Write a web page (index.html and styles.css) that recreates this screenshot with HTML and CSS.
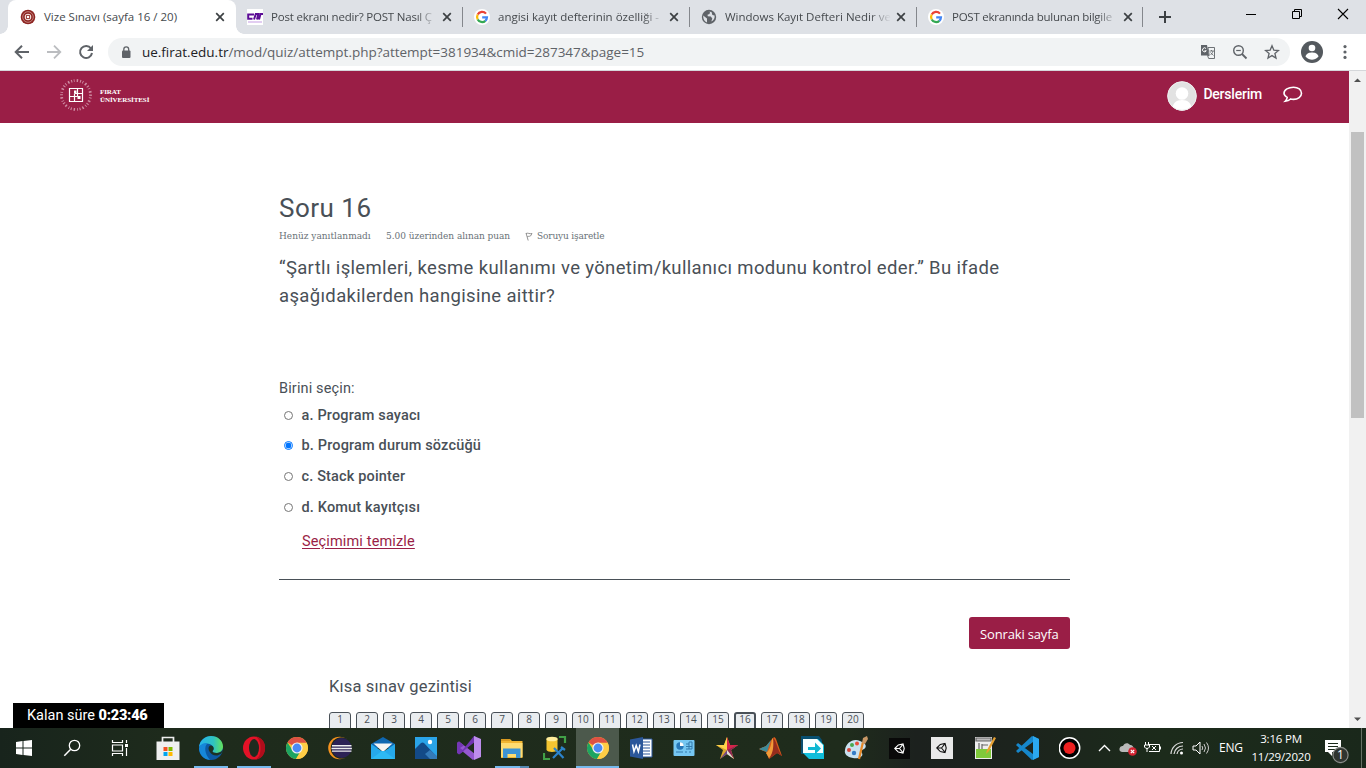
FILE: index.html
```html
<!DOCTYPE html>
<html lang="tr">
<head>
<meta charset="utf-8">
<title>Vize Sınavı (sayfa 16 / 20)</title>
<link rel="stylesheet" href="styles.css">
</head>
<body>
<svg class="defs" width="0" height="0">
  <symbol id="google" viewBox="0 0 16 16"><circle cx="8" cy="8" r="8" fill="#fff"/><g fill="none" stroke-width="2.2"><path d="M12 4.6A5 5 0 0 0 3.7 5.6" stroke="#ea4335"/><path d="M3.7 5.6a5 5 0 0 0 0 4.8" stroke="#fbbc05"/><path d="M3.7 10.4A5 5 0 0 0 11.4 11.8" stroke="#34a853"/><path d="M11.3 11.9A5 5 0 0 0 13 8.3H8.2" stroke="#4285f4"/></g></symbol>
  <symbol id="close" viewBox="0 0 10 10"><path d="M1.2 1.2l7.6 7.6M8.8 1.2L1.2 8.8" stroke="#3c4043" stroke-width="1.7"/></symbol>
  <symbol id="chrome" viewBox="0 0 24 24"><circle cx="12" cy="12" r="11" fill="#fbc02d"/><path d="M12 12L2.5 6.4A11 11 0 0 1 21.6 6.8z" fill="#dd5144"/><path d="M2.5 6.4A11 11 0 0 0 11 23l5-8.6-8.4.1z" fill="#1da462"/><path d="M12 6.8h9.6A11 11 0 0 1 11 23l5.3-8.4z" fill="#ffcd46"/><circle cx="12" cy="12" r="5.6" fill="#f1f1f1"/><circle cx="12" cy="12" r="4.4" fill="#4a8af4"/></symbol>
  <symbol id="unity" viewBox="0 0 14 14"><path d="M1 7L5.500 2.500 11.500 1.200 13 7l-1.500 5.800-6-1.300zM1.500 7H7M7 7l3.800-4.500M7 7l3.800 4.500" fill="none" stroke="currentColor" stroke-width="1.400"/></symbol>
</svg>

<header class="tabstrip">
  <div class="tab tab--active">
    <svg class="favicon" viewBox="0 0 16 16"><circle cx="8" cy="8" r="7.3" fill="#8d2421"/><circle cx="8" cy="8" r="5.3" fill="none" stroke="#d9aaa4" stroke-width=".7"/><circle cx="8" cy="8" r="3.300" fill="#f0dcd8"/><path d="M6 6h4v4H6z" fill="#a04a45"/><path d="M7 7h2v2H7z" fill="#fff"/></svg>
    <span class="tab-title"><span>Vize Sınavı (sayfa 16 / 20)</span></span><svg class="tab-close"><use href="#close"/></svg>
  </div>
  <div class="tab">
    <svg class="favicon" viewBox="0 0 16 16"><path d="M0 0h16v16H0z" fill="#fff"/><path d="M7 5.500H1.200v4.300H5.500M7 10.500L8.800 5h2.500L10 10.500M12 10.500L13.500 5H16" fill="none" stroke="#5c0c96" stroke-width="2"/><path d="M1 12h14v2H1z" fill="#e2cdf1"/></svg>
    <span class="tab-title fade t2"><span>Post ekranı nedir? POST Nasıl Ç</span></span><svg class="tab-close"><use href="#close"/></svg>
  </div>
  <div class="tab tab--sep">
    <svg class="favicon"><use href="#google"/></svg>
    <span class="tab-title fade"><span>angisi kayıt defterinin özelliği -</span></span><svg class="tab-close"><use href="#close"/></svg>
  </div>
  <div class="tab tab--sep">
    <svg class="favicon" viewBox="0 0 16 16"><circle cx="8" cy="8" r="7.2" fill="#5f6368"/><path d="M2.2 6.5L6 9.6v3.8C3.500 12.6 2 10 2.200 6.500zM7 2.500l2 .5-.5 2-2 .8.3 1.500 3 .2 1.500 2-1 3c2.500-1 3.700-3.500 3.300-6l-2.200-.4L10.500 3z" fill="#dee1e6"/></svg>
    <span class="tab-title fade"><span>Windows Kayıt Defteri Nedir ve</span></span><svg class="tab-close"><use href="#close"/></svg>
  </div>
  <div class="tab tab--sep tab--last">
    <svg class="favicon"><use href="#google"/></svg>
    <span class="tab-title fade t5"><span>POST ekranında bulunan bilgile</span></span><svg class="tab-close"><use href="#close"/></svg>
  </div>
  <svg class="newtab" viewBox="0 0 14 14"><path d="M7 1v12M1 7h12" stroke="#3c4043" stroke-width="2"/></svg>
  <div class="winctl">
    <svg viewBox="0 0 46 28"><path d="M16 14.500h10" stroke="#000"/></svg>
    <svg viewBox="0 0 46 28"><path d="M16.500 11.500h7v7h-7zM18.500 11.500v-2h7v7h-2" fill="none" stroke="#000"/></svg>
    <svg viewBox="0 0 46 28"><path d="M16 9l10 10M26 9L16 19" stroke="#000" stroke-width="1.1"/></svg>
  </div>
</header>

<div class="toolbar">
  <svg class="nav-ico" viewBox="0 0 16 16"><path d="M15 8H2M8 1.700L1.700 8 8 14.300" fill="none" stroke="#5f6368" stroke-width="2"/></svg>
  <svg class="nav-ico" viewBox="0 0 16 16"><path d="M1 8h13M8 1.700L14.300 8 8 14.300" fill="none" stroke="#bbbdc0" stroke-width="1.800"/></svg>
  <svg class="nav-ico" viewBox="0 0 16 16"><path d="M13 4.500A6 6 0 1 0 14 9" fill="none" stroke="#5f6368" stroke-width="2"/><path d="M15 1v6H9z" fill="#5f6368"/></svg>
  <div class="omnibox">
    <svg class="lock" viewBox="0 0 10 13"><rect x="1" y="4.500" width="8.500" height="7.500" rx="1" fill="#5f6368"/><path d="M2.800 5V3.400a2.400 2.400 0 0 1 4.900 0V5" fill="none" stroke="#5f6368" stroke-width="1.300"/></svg>
    <span class="url"><b>ue.firat.edu.tr</b>/mod/quiz/attempt.php?attempt=381934&amp;cmid=287347&amp;page=15</span>
    <div class="omni-icons">
      <svg viewBox="0 0 16 16"><path d="M1 1h6l2 10.500H1z" fill="#5f6368"/><path d="M8 3.500h6.500v11H8.700L7.500 11.500H9.200z" fill="#f1f3f4" stroke="#5f6368" stroke-width=".9"/><path d="M6 4.500a2 2 0 1 0 .3 2.300H4.500" fill="none" stroke="#fff"/><path d="M9.500 7h4.500M11.500 6v1M13 7c-.5 2-1.500 3-2.500 4M10.500 8.500l3 3" fill="none" stroke="#5f6368" stroke-width=".8"/></svg>
      <svg viewBox="0 0 16 16"><circle cx="6.500" cy="6.500" r="4.800" fill="none" stroke="#5f6368" stroke-width="1.400"/><path d="M10 10l4.500 4.500" stroke="#5f6368" stroke-width="1.800"/><path d="M4.200 6.500h4.600" stroke="#5f6368" stroke-width="1.200"/></svg>
      <svg viewBox="0 0 16 16"><path d="M8 1.800l1.800 4.300 4.700.4-3.600 3 1.100 4.600L8 11.600l-4 2.500 1.100-4.600-3.600-3 4.700-.4z" fill="none" stroke="#5f6368" stroke-width="1.300"/></svg>
    </div>
  </div>
  <svg class="profile" viewBox="0 0 22 22"><circle cx="11" cy="11" r="11" fill="#54595e"/><circle cx="11" cy="7" r="3.300" fill="#fff"/><path d="M4.500 15.500c1-3.500 4-4 6.500-4s5.500.5 6.500 4C15.500 18 13 18.700 11 18.700S6.500 18 4.500 15.500z" fill="#fff"/></svg>
  <svg class="menu" viewBox="0 0 4 16"><g fill="#5f6368"><circle cx="2" cy="2.600" r="1.600"/><circle cx="2" cy="8" r="1.600"/><circle cx="2" cy="13.400" r="1.600"/></g></svg>
</div>

<div class="viewport">
  <main class="page">
    <div class="sitebar">
      <div class="brand">
        <svg class="seal" viewBox="0 0 34 34"><circle cx="17" cy="17" r="14.500" fill="none" stroke="#cf8ea4" stroke-width="2.800" stroke-dasharray="1 1.600 .8 2.200 1.500 1.900"/><g fill="none" stroke="#fff" stroke-width="1.200"><path d="M10.500 10.500h13v13h-13zM18.500 10.500v8M15.500 15.500v8M10.500 18.500h8M15.500 15.500h8"/></g><path d="M15 12.500h2.500V15H15zM18.500 18h3v3h-3z" fill="#fff"/></svg>
        <div class="brand-name">FIRAT<br>ÜNİVERSİTESİ</div>
      </div>
      <div class="user">
        <svg class="avatar" viewBox="0 0 30 30"><clipPath id="av"><circle cx="15" cy="15" r="14.500"/></clipPath><g clip-path="url(#av)"><path d="M0 0h30v30H0z" fill="#e2e2e2"/><circle cx="15" cy="12.500" r="6.300" fill="#fff"/><path d="M5 30c0-8 4.500-11 10-11s10 3 10 11z" fill="#fff"/></g><circle cx="15" cy="15" r="14.300" fill="none" stroke="#eee"/></svg>
        <span class="user-link">Derslerim</span>
        <svg class="chat" viewBox="0 0 20 17"><path d="M10.500 1.200c4.700 0 8 2.600 8 6.100s-3.600 6.100-8 6.100c-1 0-2-.1-2.900-.4-1.200 1.200-3.100 2.200-5.400 2.300 1.200-1.100 1.900-2.300 2-3.900C2.200 10.300 1 9 1 7.300c0-3.500 4.500-6.100 9.500-6.100z" fill="none" stroke="#fff" stroke-width="1.600"/></svg>
      </div>
    </div>

    <section class="question">
      <h3>Soru 16</h3>
      <div class="meta"><span class="m1">Henüz yanıtlanmadı</span><span class="m2">5.00 üzerinden alınan puan</span><span class="m3"><svg class="flag" viewBox="0 0 8 9"><path d="M1 1l2.200 7.500M1 1.500c2-1 3.500.8 6 0L5.500 4C4.500 4.500 3.500 4 2.200 4.800" fill="none" stroke="#888" stroke-width=".9"/></svg>Soruyu işaretle</span></div>
      <p class="qtext">“Şartlı işlemleri, kesme kullanımı ve yönetim/kullanıcı modunu kontrol eder.” Bu ifade<br>aşağıdakilerden hangisine aittir?</p>
      <div class="prompt">Birini seçin:</div>
      <div class="answers">
        <label class="answer"><i class="radio"></i><span>a. Program sayacı</span></label>
        <label class="answer"><i class="radio radio--on"></i><span>b. Program durum sözcüğü</span></label>
        <label class="answer"><i class="radio"></i><span>c. Stack pointer</span></label>
        <label class="answer"><i class="radio"></i><span>d. Komut kayıtçısı</span></label>
      </div>
      <a class="clear">Seçimimi temizle</a>
      <div class="submit"><span class="next"><span>Sonraki sayfa</span></span></div>
    </section>

    <section class="quiznav">
      <h5>Kısa sınav gezintisi</h5>
      <div class="qn"><span>1</span><span>2</span><span>3</span><span>4</span><span>5</span><span>6</span><span>7</span><span>8</span><span>9</span><span>10</span><span>11</span><span>12</span><span>13</span><span>14</span><span>15</span><span class="current">16</span><span>17</span><span>18</span><span>19</span><span>20</span></div>
    </section>
    <div class="timer">Kalan süre <b>0:23:46</b></div>
  </main>
  <div class="scrollbar">
    <svg viewBox="0 0 17 17"><path d="M5 11h7L8.500 7.500z" fill="#505050"/></svg>
    <div class="track"><div class="thumb"></div></div>
    <svg viewBox="0 0 17 17"><path d="M5 6.500h7L8.500 10z" fill="#505050"/></svg>
  </div>
</div>

<footer class="taskbar">
  <div class="sys"><svg viewBox="0 0 24 24"><path d="M4 6l6.500-1v6.500H4zM11.500 4.900L20 4v7.500h-8.500zM4 12.500h6.500V19L4 18zM11.500 12.500H20V20l-8.500-1z" fill="#fff"/></svg></div>
  <div class="sys"><svg viewBox="0 0 24 24"><circle cx="14.500" cy="9.500" r="5.200" fill="none" stroke="#fff" stroke-width="1.300"/><path d="M10.700 13.300L4.300 19.700" stroke="#fff" stroke-width="1.500"/></svg></div>
  <div class="sys"><svg viewBox="0 0 24 24"><path d="M4.500 4v2.500h10V4M4.500 20v-2.500h10V20M4.500 9h10v6h-10zM18.500 4v3M18.500 12v8" fill="none" stroke="#fff" stroke-width="1.200"/><path d="M17 8h3v3h-3z" fill="#fff"/></svg></div>
  <div class="apps">
    <div class="app"><svg viewBox="0 0 24 24"><path d="M6.500 6V1.500h11V6" fill="none" stroke="#eee" stroke-width="1.700"/><path d="M.5 5.500h23V24H.5z" fill="#efefef"/><path d="M7.500 11h4v4h-4z" fill="#f25022"/><path d="M12.500 11h4v4h-4z" fill="#7fba00"/><path d="M7.500 16h4v4h-4z" fill="#00a4ef"/><path d="M12.500 16h4v4h-4z" fill="#ffb900"/></svg></div>
    <div class="app app--run"><svg viewBox="0 0 24 24"><defs><linearGradient id="eg"><stop stop-color="#26b4ee"/><stop offset=".6" stop-color="#2fc2c0"/><stop offset="1" stop-color="#65e25a"/></linearGradient></defs><circle cx="12" cy="12" r="12" fill="#0c59a4"/><path d="M0 11C1 4 6 0 12 0c7 0 12 5 12 10.500 0 4-3 6.500-6.500 6.500-3 0-4.500-1-4-2 1.500-1.500 1.500-3 .5-4.500C11.500 6.500 4 6 0 11z" fill="url(#eg)"/><path d="M0 12C1.500 7.500 5 6.500 8.500 7.500 5 10 5.500 18 11 23.900 4 23.500 0 18 0 12z" fill="#1687d9"/><path d="M13.500 15c1.500-1.500 1.500-3 .5-4.500-1-1-2.500-1.500-3.500-.5-3 3 1.500 10.500 8 9.500l3.500-1.700L24 15v-1c-1.500 2-4 3-6.500 3-2.500 0-4.200-.8-4-2z" fill="#1d3123"/></svg></div>
    <div class="app app--run"><svg viewBox="0 0 24 24"><ellipse cx="12" cy="12" rx="11" ry="11.500" fill="#e41227"/><path d="M14 .5c6 1 9 5.500 9 11.500s-3 10.500-9 11.500c4-3 4.500-7 4.500-11.500S18 4 14 .5z" fill="#b00d1b"/><ellipse cx="12" cy="12" rx="5" ry="8.900" fill="#1e2b1f"/></svg></div>
    <div class="app"><svg viewBox="0 0 24 24"><use href="#chrome"/></svg></div>
    <div class="app"><svg viewBox="0 0 24 24"><circle cx="11.500" cy="12" r="11.300" fill="#f7941e"/><circle cx="13.500" cy="12" r="10.800" fill="#1e2b1f"/><circle cx="13.700" cy="12" r="10" fill="#2c2255"/><path d="M4 9h19.500v1.500H4zM3.500 11.700h20.400v1.500H3.500zM4 14.500h19.500v1.300H4z" fill="#eee"/></svg></div>
    <div class="app"><svg viewBox="0 0 24 24"><path d="M0 8l12-7 12 7v4H0z" fill="#0f67b1"/><path d="M0 8l12 8L24 8v15H0z" fill="#26a9eb"/><path d="M2.500 7.500h19L12 16z" fill="#f4f4f4"/><path d="M0 23l11-8h2l11 8z" fill="#2db9f3"/></svg></div>
    <div class="app"><svg viewBox="0 0 24 24"><path d="M1 1h22v22H1z" fill="#2aa4e8"/><path d="M1 13l6-6c1-.8 2-.8 3 0l13 14v2H1z" fill="#134a87"/><path d="M11 18l5-4 7 6v3h-7z" fill="#347ab8"/><circle cx="16" cy="6" r="2.200" fill="#fff"/></svg></div>
    <div class="app"><svg viewBox="0 0 24 24"><path d="M0 7l2-1.500L18 18v4.500L16 24 2 12.500z" fill="#9458cf"/><path d="M0 7l2-1.500 5 4L3 12l4 3-5 3.500L0 17z" fill="#7436b5"/><path d="M2 18.500L17 0l2 1v4z" fill="#7135b2"/><path d="M17 0l7 3v18l-7 3z" fill="#bd8dec"/></svg></div>
    <div class="app app--group"><svg viewBox="0 0 24 24"><path d="M1 3h9l2 2h10.500v17H1z" fill="#f2b632"/><path d="M1 7h21.500v14H1z" fill="#ffdc71"/><path d="M1 3h9v2H1z" fill="#d99a20"/><path d="M3 12.500h17.500V22H16v-4H7.500v4H3z" fill="#3e94d4"/></svg></div>
    <div class="app"><svg viewBox="0 0 24 24"><path d="M16 1h6v6M1 17v6h6" fill="none" stroke="#41a047" stroke-width="2.200"/><path d="M3.500 3v11c1 2.500 10 2.500 11 0V3z" fill="#f4c531"/><ellipse cx="9" cy="3" rx="5.700" ry="2.300" fill="#ffed9a"/><path d="M11 12l9.500 10M20 12L10 22M18 11l4 3" stroke="#2c83cb" stroke-width="2.200"/></svg></div>
    <div class="app app--active"><svg viewBox="0 0 24 24"><use href="#chrome"/></svg></div>
    <div class="app"><svg viewBox="0 0 24 24"><path d="M11 3h12v18H11z" fill="#fff" stroke="#2b579a"/><path d="M14 6h7M14 9h7M14 12h7M14 15h7M14 18h7" stroke="#2b579a" stroke-width="1.200"/><path d="M1 3.500L14 1v22L1 20.500z" fill="#2b579a"/><path d="M3.500 8.500l1.500 7 2.200-6 2.200 6 1.600-7" fill="none" stroke="#fff" stroke-width="1.500"/></svg></div>
    <div class="app"><svg viewBox="0 0 24 24"><rect x="1.500" y="4" width="21" height="16" rx="1" fill="#76c7f2"/><circle cx="8" cy="10" r="3.700" fill="#2777b8"/><path d="M8 10V6.300A3.700 3.700 0 0 1 11.700 10z" fill="#fff"/><path d="M14 8h3V6h3v7h-6M17 8v5M14 10.500h6M4 16h7M13 16h2M17 16h2" stroke="#337bad" fill="none"/></svg></div>
    <div class="app"><svg viewBox="0 0 24 24"><path d="M12 1l3 8h8l-7 5 3 9-7-5-7 5 3-9-7-5h8z" fill="#dba72d"/><path d="M12 1v13h4l7-5h-8z" fill="#d5254a"/><path d="M12 14l7 9-3-9 7-5z" fill="#8c2753"/><path d="M12 14v4l7 5z" fill="#ddd"/><path d="M12 14l-7 9 7-5z" fill="#704685"/><path d="M12 1L9 9H1l11 5z" fill="#ffd34a"/></svg></div>
    <div class="app"><svg viewBox="0 0 24 24"><path d="M1 13l7-3 7-8c1-1 2-1 3 1l6 17-5-3-8 6-3-7z" fill="#d85c1b"/><path d="M1 13l7-3 5-6-4 12z" fill="#3c8b99"/><path d="M15 2c3 1 4 11 9 18l-5-3-8 6c4-7 4-14 4-21z" fill="#962d1d"/><path d="M14 3c-1 8-3 12-6 14l3 5c4-4 5-12 4-20z" fill="#f29c38"/></svg></div>
    <div class="app"><svg viewBox="0 0 24 24"><path d="M0 0h18l3 4v14H0z" fill="#084f70"/><path d="M2 3h15l6 6v14H8l-6-6z" fill="#10bedb"/><path d="M2 3h14l6 6v8H2z" fill="#f5ffff"/><path d="M7 11h7V6.500l6 6-6 6V14H7z" fill="#08b8d3"/></svg></div>
    <div class="app"><svg viewBox="0 0 24 24"><path d="M1 14C2 7 9 2 16 5c8 3 6 7 4 8-3 1-3 3-2 4 2 4-4 6-9 5-6-1-9-4-8-8z" fill="#c9e1ef"/><circle cx="5" cy="14" r="2" fill="#d9463b"/><circle cx="8" cy="9" r="2" fill="#48a84e"/><circle cx="13" cy="7.500" r="2" fill="#e94f3a"/><circle cx="10" cy="17" r="2.200" fill="#347cc6"/><path d="M15 23l4-17" stroke="#e88925" stroke-width="2.200"/><path d="M18 7l1-5 4-2 1 3-3 5z" fill="#c99866"/></svg></div>
    <div class="app"><svg viewBox="0 0 24 24"><path d="M2 2h21v21H2z" fill="#090909"/><use href="#unity" x="7" y="7" width="11" height="11" color="#fff"/></svg></div>
    <div class="app"><svg viewBox="0 0 24 24"><path d="M1 1h22v22H1z" fill="#e9e9e9"/><use href="#unity" x="6" y="6.500" width="11" height="11" color="#111"/></svg></div>
    <div class="app"><svg viewBox="0 0 24 24"><path d="M2 1h17v22H2z" fill="#eee"/><path d="M3 13h15v9H3z" fill="#80c93b"/><path d="M3 2h15v3H3zM6 7v6M9 8v5M9 9h6" stroke="#666" stroke-width="1.200" fill="#bbb"/><path d="M13 18l1-4 7-13 2 1-7 13z" fill="#e7a132"/></svg></div>
    <div class="app"><svg viewBox="0 0 24 24"><path d="M16 0l7 3v18l-7 3L0 9l2-2 15 11V6L2 17l-2-2z" fill="#1687cb"/><path d="M17 0l6 3v18l-6 3z" fill="#2ba8ef"/></svg></div>
    <div class="app"><svg viewBox="0 0 24 24"><circle cx="10.500" cy="12" r="10.200" fill="#000" stroke="#fff" stroke-width="1.500"/><circle cx="10.500" cy="12" r="6" fill="#ed2020"/></svg></div>
  </div>
  <div class="tray">
    <svg viewBox="0 0 24 24"><path d="M6 15l5.500-5.500L17 15" fill="none" stroke="#fff" stroke-width="1.400"/></svg>
    <svg viewBox="0 0 24 24"><path d="M5 16a3 3 0 0 1 1-6c1-3 5-4 7-1 3 0 4 2 4 7z" fill="#b9b9b9"/><circle cx="15.500" cy="15.500" r="4.300" fill="#d42331"/><path d="M13.800 13.800l3.400 3.400M17.200 13.800l-3.400 3.400" stroke="#fff" stroke-width="1.200"/></svg>
    <svg viewBox="0 0 24 24"><path d="M8 8.500h10.500v7H8M19.500 10.500v3M11 10l4 4M15 10l-4 4M4.500 6v3M7.500 6v3M3.500 9h5v2c-1 2-4 2-5 0zM6 12v4" fill="none" stroke="#fff" stroke-width="1"/></svg>
    <svg viewBox="0 0 24 24"><path d="M6 18A12 12 0 0 1 18 6.500M9 18a9 9 0 0 1 9-8M12 18a6 6 0 0 1 6-5" fill="none" stroke="#ddd" stroke-width="1.200"/><circle cx="16.500" cy="17" r="1.500" fill="#fff"/></svg>
    <svg viewBox="0 0 24 24"><path d="M4 10h3l4-4v12l-4-4H4z" fill="none" stroke="#fff"/><path d="M13 10q1.500 2 0 4M15 8q3 4 0 8M17.500 6.500q4 5.500 0 11" fill="none" stroke="#ccc"/></svg>
  </div>
  <span class="lang">ENG</span>
  <div class="clock"><span>3:16 PM</span><span class="date">11/29/2020</span></div>
  <div class="notif"><svg viewBox="0 0 26 26"><path d="M1 2h16v12H8v4l-4-4H1z" fill="#fff"/><path d="M4 5.500h10M4 8.500h10M4 11.500h7" stroke="#1b2a1b"/><circle cx="16.500" cy="17" r="7.600" fill="#303530" stroke="#8b8e8b" stroke-width="1.200"/></svg><span>1</span></div>
</footer>
</body>
</html>
```
FILE: styles.css
```css
* { box-sizing: border-box; }
body { margin: 0; width: 1366px; height: 768px; overflow: hidden; display: flex; flex-direction: column; font-family: "Open Sans", "Noto Sans", sans-serif; background: #fff; }
svg { display: block; flex: none; }
.defs { position: absolute; }

.tabstrip { flex: none; height: 34px; background: #dee1e6; display: flex; align-items: stretch; padding-left: 8px; }
.tab { width: 227px; flex: none; display: flex; align-items: center; padding-left: 12px; position: relative; }
.tab--active { background: #fff; border-radius: 8px 8px 0 0; width: 228px; margin-right: -1px; }
.tab--active::before, .tab--active::after { content: ""; position: absolute; bottom: 0; width: 8px; height: 8px; }
.tab--active::before { left: -8px; background: radial-gradient(circle at 0 0, transparent 7.5px, #fff 8px); }
.tab--active::after { right: -8px; background: radial-gradient(circle at 100% 0, transparent 7.5px, #fff 8px); }
.tab--sep { background: linear-gradient(#84878c, #84878c) 0 7px / 1px 20px no-repeat; }
.tab--last::after { content: ""; position: absolute; right: 0; top: 7px; width: 1px; height: 20px; background: #84878c; }
.favicon { width: 16px; height: 16px; margin-right: 8px; }
.tab-title { width: 166px; white-space: nowrap; font-size: 11.5px; color: #45494d; line-height: 20px; }
.fade { -webkit-mask-image: linear-gradient(90deg, #000 145px, transparent 166px); mask-image: linear-gradient(90deg, #000 145px, transparent 166px); }
.t2 { letter-spacing: -.2px; }
.t5 { letter-spacing: -.25px; }
.tab-close { width: 10px; height: 10px; margin-left: 5px; }
.newtab { width: 14px; height: 14px; margin: 10px 0 0 15px; }
.winctl { display: flex; margin-left: auto; margin-right: -2px; }
.winctl svg { width: 46px; height: 28px; }

.toolbar { flex: none; height: 37px; border-bottom: 1px solid #d5d7da; display: flex; align-items: center; padding-left: 14px; background: #fff; }
.nav-ico { width: 16px; height: 16px; margin-right: 16px; }
.omnibox { width: 1182px; height: 28px; margin-left: -2px; border-radius: 14px; background: #f1f3f4; display: flex; align-items: center; padding: 0 10px 0 13px; }
.lock { width: 10px; height: 13px; margin-right: 11px; }
.url { font-size: 13.5px; letter-spacing: -.02px; color: #5f6368; white-space: nowrap; }
.url b { font-weight: 400; color: #202124; }
.omni-icons { display: flex; gap: 16px; margin-left: auto; }
.omni-icons svg { width: 16px; height: 16px; }
.profile { width: 22px; height: 22px; margin-left: 11px; }
.menu { width: 4px; height: 16px; margin-left: 20px; }

.viewport { flex: none; height: 657px; display: flex; }
.page { width: 1349px; height: 657px; overflow: hidden; position: relative; background: #fff; color: #495057; font-family: Roboto, sans-serif; }
.sitebar { height: 52px; background: #9a1e46; display: flex; justify-content: space-between; padding: 0 46px 0 59px; }
.brand { display: flex; align-items: flex-start; }
.seal { width: 34px; height: 34px; margin-top: 7px; }
.brand-name { margin: 17px 0 0 7px; font: 700 7px/8px "Liberation Serif", serif; letter-spacing: -.07px; color: #fff; }
.user { display: flex; align-items: flex-start; color: #fff; }
.avatar { width: 30px; height: 30px; margin-top: 10px; }
.user-link { font-size: 14px; line-height: 20px; letter-spacing: -.22px; margin: 13px 0 0 6px; font-weight: 500; }
.chat { width: 20px; height: 17px; margin: 15px 0 0 21px; }

.question { margin-left: 279px; width: 791px; padding-top: 68px; }
h3 { margin: 0; font-size: 26px; font-weight: 400; line-height: 34px; letter-spacing: .5px; white-space: nowrap; }
.meta { display: flex; height: 20px; margin-top: 2px; line-height: 18px; font-family: "DejaVu Serif", serif; font-size: 9px; color: #6a7278; white-space: nowrap; }
.m1 { width: 107px; }
.m2 { width: 139px; letter-spacing: -.04px; }
.m3 { display: flex; align-items: center; height: 18px; letter-spacing: -.15px; }
.flag { width: 8px; height: 9px; margin: 1px 4px 0 0; }
.qtext { margin: 7px 0 0; font-size: 18.5px; line-height: 28px; letter-spacing: .345px; white-space: nowrap; }
.prompt { margin-top: 69px; font-size: 14.5px; line-height: 20px; letter-spacing: .14px; }
.answers { margin-top: 1px; }
.answer { height: 30.6px; display: flex; align-items: center; font-size: 14.5px; font-weight: 500; letter-spacing: .16px; white-space: nowrap; }
.radio { width: 9px; height: 9px; border: 1px solid #767676; border-radius: 50%; margin: 0 8.5px 0 5px; flex: none; }
.radio--on { border-color: #0075ff; background: radial-gradient(circle, #0075ff 2.7px, #fff 3.2px); }
.clear { display: block; width: max-content; margin: 9.6px 0 0 23px; font-size: 14.5px; line-height: 20px; letter-spacing: .14px; color: #9a1e46; text-decoration: underline; text-underline-offset: 2px; }
.submit { margin-top: 27px; border-top: 1px solid #495057; padding-top: 37px; display: flex; justify-content: flex-end; }
.next { width: 101px; height: 32px; border-radius: 3px; background: #9a1e46; color: #fff; font: 13px/34px "Open Sans", sans-serif; letter-spacing: -.15px; padding-left: 11px; white-space: nowrap; }

.quiznav { margin-left: 329px; padding-top: 27px; }
h5 { margin: 0; font-size: 16.5px; font-weight: 400; line-height: 22px; letter-spacing: .15px; }
.qn { display: flex; gap: 5px; margin-top: 14px; font: 10px/13px "Open Sans", sans-serif; }
.qn span { width: 22px; height: 30px; border: 1px solid #495057; border-radius: 3px; background: #e9ecef; text-align: center; }
.qn .current { border-width: 2px; line-height: 11px; }
.timer { position: absolute; left: 13px; bottom: 0; width: 151px; height: 25px; background: #000; color: #fff; font-size: 14.5px; line-height: 25px; padding-left: 14px; white-space: pre; }
.timer b { font-weight: 900; letter-spacing: -.25px; }

.scrollbar { width: 17px; background: #f1f1f1; display: flex; flex-direction: column; }
.scrollbar svg { width: 17px; height: 17px; }
.track { flex: 1; padding: 44px 2px 0; }
.thumb { height: 286px; background: #c1c1c1; }

.taskbar { position: relative; flex: none; height: 40px; background: linear-gradient(90deg, #18241c 0, #1e2b1c 12%, #1f2c1c 62%, #1c211e 67%, #1c231d 74%, #1c2b1b 85%, #1a281b 100%); display: flex; color: #fff; }
.taskbar::after { content: ""; position: absolute; right: 4px; top: 0; width: 1px; height: 40px; background: #667064; }
.sys { width: 48px; display: flex; align-items: center; justify-content: center; }
.sys svg { width: 24px; height: 24px; }
.apps { display: flex; margin-left: 2px; }
.app { width: 43px; display: flex; align-items: center; justify-content: center; }
.app svg { width: 24px; height: 24px; }
.app--run { background: linear-gradient(#76b9ed, #76b9ed) 50% 100% / 34px 2px no-repeat; }
.app--group { background: linear-gradient(90deg, #76b9ed 25px, #5488b0 25px) 50% 100% / 34px 2px no-repeat; }
.app--active { background: linear-gradient(#76b9ed, #76b9ed) 0 100% / 100% 2px no-repeat #4c594c; }
.tray { display: flex; align-items: center; margin-left: 1px; }
.tray svg { width: 24px; height: 24px; }
.lang { font-size: 12px; line-height: 40px; width: 24px; margin-left: 6px; letter-spacing: -.2px; }
.clock { width: 76px; display: flex; flex-direction: column; align-items: center; font-size: 11.5px; letter-spacing: -.2px; line-height: 18px; padding-top: 2px; white-space: nowrap; }
.notif { position: relative; width: 26px; margin-left: auto; margin-right: 16px; padding-top: 10px; }
.notif svg { width: 26px; height: 26px; }
.notif span { position: absolute; left: 13px; top: 20px; font-size: 12px; line-height: 14px; }
```
